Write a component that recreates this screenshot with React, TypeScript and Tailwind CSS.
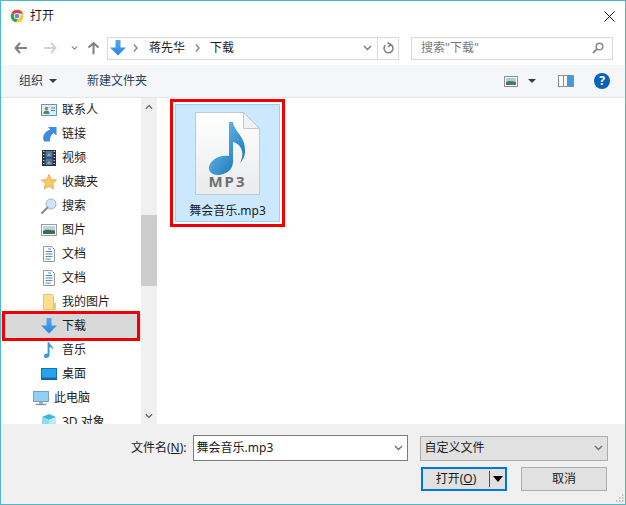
import type { ReactNode } from "react";

const Chrome = () => (
  <svg width="14" height="14" viewBox="0 0 16 16">
    <path d="M8 8 1.700 4.600A7.500 7.500 0 0 1 15 5.500H8Z" fill="#d9453a" />
    <path d="M1.700 4.600A7.500 7.500 0 0 0 7 15.500l3.200-6Z" fill="#3a9d58" />
    <path d="M15 5.500A7.500 7.500 0 0 1 7 15.500l3.400-7.500Z" fill="#f5c93f" />
    <circle cx="8" cy="8" r="3.500" fill="#fff" />
    <circle cx="8" cy="8" r="2.700" fill="#5a8fe8" />
  </svg>
);

const Arrow = ({ color, flip }: { color: string; flip?: boolean }) => (
  <svg width="13" height="12" viewBox="0 0 13 12" className={flip ? "rotate-180" : ""}>
    <path d="M6 1 1.500 6 6 11M2 6h11" fill="none" stroke={color} strokeWidth="2" />
  </svg>
);

const Chevron = ({ color = "#7a7a7a", size = 9 }: { color?: string; size?: number }) => (
  <svg width={size} height={6} viewBox="0 0 9 6">
    <path d="M1 1l3.500 3.500L8 1" fill="none" stroke={color} strokeWidth="1.400" />
  </svg>
);

const CrumbSep = () => (
  <svg width="5" height="8" viewBox="0 0 5 8">
    <path d="M1 .5 4 4 1 7.500" fill="none" stroke="#8a8a8a" strokeWidth="1.500" />
  </svg>
);

const Caret = ({ color = "#2b3f5c" }: { color?: string }) => (
  <svg width="8" height="4" viewBox="0 0 8 4">
    <path d="M0 0h8L4 4Z" fill={color} />
  </svg>
);

const DownloadIcon = ({ w = 16, h = 16 }: { w?: number; h?: number }) => (
  <svg width={w} height={h} viewBox="0 0 16 16">
    <defs>
      <linearGradient id="dl" x1="0" y1="0" x2="0" y2="1">
        <stop offset="0" stopColor="#55a6ee" />
        <stop offset="1" stopColor="#2d86e0" />
      </linearGradient>
    </defs>
    <path d="M5.500 0h5v7.500H16L8 15.500 0 7.500h5.500Z" fill="url(#dl)" />
  </svg>
);

const Contact = () => (
  <svg width="16" height="12" viewBox="0 0 16 12">
    <rect x=".5" y=".5" width="15" height="11" fill="#dcecf8" stroke="#5d98c4" />
    <circle cx="5.500" cy="4.500" r="1.800" fill="#a97f5a" />
    <path d="M2.500 10c0-2.600 1.300-3.500 3-3.500s3 .9 3 3.500Z" fill="#4d8a6a" />
    <path d="M10 4h4M10 6.500h4" stroke="#5d7f9c" />
  </svg>
);

const Link = () => (
  <svg width="16" height="16" viewBox="0 0 16 16">
    <path d="M7 1h8.500v8.500l-2.800-2.600C10.500 8.500 9 10.500 9 15.500H3C1 11 2.500 6 9.400 3.600Z" fill="#3f8ede" />
  </svg>
);

const Film = () => (
  <svg width="14" height="16" viewBox="0 0 14 16">
    <rect width="14" height="16" fill="#2e2e2e" />
    <path d="M1 1.500h1.500M1 4.500h1.500M1 7.500h1.500M1 10.500h1.500M1 13.500h1.500M11.500 1.500H13M11.500 4.500H13M11.500 7.500H13M11.500 10.500H13M11.500 13.500H13" stroke="#cfcfcf" />
    <rect x="3.500" y="1" width="7" height="6.500" fill="#3e78c8" />
    <rect x="3.500" y="8.500" width="7" height="6.500" fill="#3e78c8" />
    <path d="M5 6l2-3 2 3ZM5 14l2-3 2 3Z" fill="#d9a928" />
  </svg>
);

const Star = () => (
  <svg width="16" height="16" viewBox="0 0 16 16">
    <path d="M8 .5l2.300 5 5.200.6-3.900 3.500 1.100 5.400L8 12.300 3.300 15l1.100-5.400L.5 6.100l5.200-.6Z" fill="#f9c867" stroke="#e2a04a" strokeWidth=".8" />
  </svg>
);

const Magnifier = () => (
  <svg width="16" height="16" viewBox="0 0 16 16">
    <circle cx="10" cy="6" r="5" fill="#cfe6fa" stroke="#9db4c8" />
    <path d="M6.400 9.600 1 15" stroke="#7f7f7f" strokeWidth="1.800" strokeLinecap="round" />
  </svg>
);

const Picture = () => (
  <svg width="16" height="12" viewBox="0 0 16 12">
    <rect x=".5" y=".5" width="15" height="11" fill="#fff" stroke="#9c9c9c" />
    <rect x="2" y="2" width="12" height="8" fill="#b8d4ea" />
    <path d="M2 7c3-2 5-1.500 12-.5V10H2Z" fill="#3f6d52" />
  </svg>
);

const Doc = () => (
  <svg width="12" height="16" viewBox="0 0 12 16">
    <path d="M.5.500h8l3 3v12H.5Z" fill="#fbfbfb" stroke="#9a9a9a" />
    <path d="M5 3h3M2.500 5.500h7M2.500 8h7M2.500 10.500h7M2.500 13h5" stroke="#4f8fc8" />
  </svg>
);

const Folder = () => (
  <svg width="13" height="16" viewBox="0 0 13 16">
    <path d="M.5.500h9l1 1V15.500H.5Z" fill="#fde08f" stroke="#e6c46a" />
    <path d="M10.500 9h2v6.500h-2Z" fill="#f2cd6f" stroke="#e0bb60" strokeWidth=".6" />
  </svg>
);

const Note = () => (
  <svg width="10" height="16" viewBox="0 0 10 16">
    <path d="M3.600 0h1.500c.3 3 4.400 3.700 4 8-.4-1.600-2-2.700-3.600-2.900V13c0 1.800-1.600 3-3.400 3C.700 16 0 15 0 14c0-1.500 1.700-2.700 3.600-2.300Z" fill="#2f9be8" />
  </svg>
);

const Desktop = () => (
  <svg width="16" height="12" viewBox="0 0 16 12">
    <rect width="16" height="11" fill="#0b72c9" />
    <rect x="1" y="1" width="14" height="8.500" fill="#27a3ee" />
    <rect y="10.500" width="16" height="1.500" fill="#1c5c94" />
  </svg>
);

const Computer = () => (
  <svg width="16" height="15" viewBox="0 0 16 15">
    <rect x=".5" y=".5" width="15" height="10" fill="#8fd0f4" stroke="#7ba1b8" />
    <path d="M6 11h4v2H6Z" fill="#9ab0bd" />
    <path d="M2.500 13.500h11" stroke="#8a9aa5" strokeWidth="1.500" />
  </svg>
);

const Cube = () => (
  <svg width="16" height="16" viewBox="0 0 16 16">
    <path d="M8 0l7 3-7 3-7-3Z" fill="#3db8d8" />
    <path d="M1 3l7 3v10l-7-3Z" fill="#8fdcec" />
    <path d="M15 3 8 6v10l7-3Z" fill="#b8ebf4" />
  </svg>
);

const Mp3Icon = () => (
  <svg width="65" height="83" viewBox="0 0 65 83">
    <defs>
      <linearGradient id="pg" x1="0" y1="0" x2="0" y2="1">
        <stop offset="0" stopColor="#ffffff" />
        <stop offset="1" stopColor="#e9ebec" />
      </linearGradient>
      <linearGradient id="ng" x1="0" y1="0" x2="1" y2="1">
        <stop offset="0" stopColor="#7fd0f5" />
        <stop offset="1" stopColor="#0c68b0" />
      </linearGradient>
    </defs>
    <path d="M.5.500h48l16 16v66H.5Z" fill="url(#pg)" stroke="#c4c8cc" />
    <path d="M48.500.500v16h16Z" fill="#f2f2f2" stroke="#c4c8cc" />
    <path d="M34 10h4c1 10 13 14 12 30-.2 4-2 8-5 11 2-4 3-8 2-12-1-5-5-8-9-9V50c0 8-8 13-15 13-6 0-9-3-9-7 0-7 10-14 20-12Z" fill="url(#ng)" />
  </svg>
);

const Mp3Thumb = () => (
  <div className="relative h-[83px] w-[65px]">
    <Mp3Icon />
    <span className="absolute bottom-[6px] left-0 w-full text-center text-[15px] font-bold tracking-[2px] text-[#6f6f6f]">
      MP3
    </span>
  </div>
);

const Row = ({
  icon,
  label,
  selected,
  indent = "pl-[40px]",
}: {
  icon: ReactNode;
  label: string;
  selected?: boolean;
  indent?: string;
}) => (
  <div className={`flex h-6 shrink-0 items-center ${indent} ${selected ? "bg-[#d9d9d9]" : ""}`}>
    <span className="flex w-4 justify-center">{icon}</span>
    <span className="ml-[5px] whitespace-nowrap">{label}</span>
  </div>
);

export default function App() {
  return (
    <div
      className="flex h-[505px] w-[626px] flex-col overflow-hidden border border-[#4cb9ca] bg-white text-[12px] leading-none text-[#1a1a1a]"
      style={{ fontFamily: '"Noto Sans", "Noto Sans CJK SC", sans-serif' }}
    >
      {/* title */}
      <div className="flex h-[30px] shrink-0 items-center pl-[9px] pr-[10px]">
        <Chrome />
        <span className="ml-[6px]">打开</span>
        <svg width="11" height="11" viewBox="0 0 11 11" className="ml-auto">
          <path d="M.5.500l10 10M10.500.500l-10 10" stroke="#1a1a1a" strokeWidth="1" />
        </svg>
      </div>

      {/* nav */}
      <div className="flex h-[34px] shrink-0 items-center pr-3">
        <span className="ml-[13px]"><Arrow color="#7f7f7f" /></span>
        <span className="ml-[17px]"><Arrow color="#d4d4d4" flip /></span>
        <span className="ml-[14px]"><Chevron color="#8a8a8a" size={7} /></span>
        <span className="ml-[9px] rotate-90"><Arrow color="#7f7f7f" /></span>
        <div className="ml-[7px] flex h-[23px] w-[292px] items-center border border-[#d9d9d9]">
          <span className="ml-[2px]"><DownloadIcon /></span>
          <span className="ml-[7px]"><CrumbSep /></span>
          <span className="ml-[11px]">蒋先华</span>
          <span className="ml-[10px]"><CrumbSep /></span>
          <span className="ml-[10px]">下载</span>
          <span className="ml-auto mr-[5px]"><Chevron /></span>
          <div className="flex h-full w-[21px] items-center justify-center border-l border-[#d9d9d9]">
            <svg width="11" height="12" viewBox="0 0 11 12">
              <path d="M7.800 2.500A4.500 4.500 0 1 1 2.500 3M4.500 .5 7.800 2.500 5 5" fill="none" stroke="#7f7f7f" strokeWidth="1.500" />
            </svg>
          </div>
        </div>
        <div className="ml-3 flex h-[23px] w-[202px] items-center border border-[#d9d9d9] pl-[9px] pr-2 text-[#7a7a7a]">
          <span>搜索"下载"</span>
          <svg width="12" height="12" viewBox="0 0 12 12" className="ml-auto">
            <circle cx="7.500" cy="4.500" r="3.300" fill="none" stroke="#8a8a8a" strokeWidth="1.500" />
            <path d="M5 7 1 11" stroke="#8a8a8a" strokeWidth="2" />
          </svg>
        </div>
      </div>

      {/* toolbar */}
      <div className="flex h-[33px] shrink-0 items-center border-b border-[#e5e5e5] bg-[#f5f6f7] text-[#2b3f5c]">
        <span className="ml-[18px]">组织</span>
        <span className="ml-[6px]"><Caret /></span>
        <span className="ml-[30px]">新建文件夹</span>
        <span className="ml-auto">
          <svg width="14" height="11" viewBox="0 0 14 11">
            <rect x=".5" y=".5" width="13" height="10" fill="#fff" stroke="#8f8f8f" />
            <rect x="2" y="2" width="10" height="7" fill="#a9d0ea" />
            <path d="M2 6c3-1.500 6-1 10 0v3H2Z" fill="#4d7a5c" />
          </svg>
        </span>
        <span className="ml-[10px]"><Caret /></span>
        <span className="ml-[22px]">
          <svg width="16" height="12" viewBox="0 0 16 12">
            <rect x=".5" y=".5" width="15" height="11" fill="#fff" stroke="#8f8f8f" />
            <rect x="9" y="1" width="6" height="10" fill="#3f9be0" />
            <path d="M5.500 1v10" stroke="#8f8f8f" />
          </svg>
        </span>
        <span className="ml-5 mr-[15px] flex h-4 w-4 items-center justify-center rounded-full bg-[#0a62b8] text-[12px] font-bold text-white">?</span>
      </div>

      {/* body */}
      <div className="flex min-h-0 flex-1">
        <div className="relative flex w-[140px] shrink-0 flex-col overflow-hidden">
          <Row icon={<Contact />} label="联系人" />
          <Row icon={<Link />} label="链接" />
          <Row icon={<Film />} label="视频" />
          <Row icon={<Star />} label="收藏夹" />
          <Row icon={<Magnifier />} label="搜索" />
          <Row icon={<Picture />} label="图片" />
          <Row icon={<Doc />} label="文档" />
          <Row icon={<Doc />} label="文档" />
          <Row icon={<Folder />} label="我的图片" />
          <Row icon={<DownloadIcon />} label="下载" selected />
          <Row icon={<Note />} label="音乐" />
          <Row icon={<Desktop />} label="桌面" />
          <Row icon={<Computer />} label="此电脑" indent="pl-[32px]" />
          <Row icon={<Cube />} label="3D 对象" />
          {/* annotation */}
          <div className="absolute left-[1px] top-[213px] h-[30px] w-[138px] border-[3px] border-[#f00000]" />
        </div>

        {/* scrollbar */}
        <div className="flex w-4 shrink-0 flex-col items-stretch bg-[#f0f0f0]">
          <div className="flex h-[17px] shrink-0 items-center justify-center">
            <span className="rotate-180"><Chevron color="#606060" size={8} /></span>
          </div>
          <div className="mt-[100px] h-[71px] shrink-0 bg-[#cdcdcd]" />
          <div className="mt-auto flex h-[17px] shrink-0 items-center justify-center">
            <Chevron color="#606060" size={8} />
          </div>
        </div>

        {/* files */}
        <div className="relative flex-1 pl-[13px] pt-[1px]">
          <div className="box-content flex h-[118px] w-[105px] border-[3px] border-[#f00000] p-[2px]">
            <div className="flex w-full flex-col items-center border border-[#99d1ff] bg-[#cce8ff] pt-[7px]">
              <Mp3Thumb />
              <span className="mt-[10px] whitespace-nowrap">舞会音乐.mp3</span>
            </div>
          </div>
        </div>
      </div>

      {/* footer */}
      <div className="relative flex h-[80px] shrink-0 flex-col bg-[#f0f0f0] pl-[130px] pt-[11px]">
        <div className="flex items-center">
          <span className="whitespace-nowrap">
            文件名(<span className="underline">N</span>):
          </span>
          <div className="ml-[6px] flex h-[26px] w-[215px] items-center justify-between border border-[#7a7a7a] bg-white pl-[3px] pr-[4px]">
            <span>舞会音乐.mp3</span>
            <Chevron color="#707070" />
          </div>
          <div className="ml-[12px] flex h-[25px] w-[188px] items-center justify-between border border-[#adadad] bg-[#e1e1e1] pl-[4px] pr-[4px]">
            <span>自定义文件</span>
            <Chevron color="#707070" />
          </div>
        </div>
        <div className="mt-[6px] flex items-center pl-[290px]">
          <div className="flex h-6 w-[86px] items-center border-2 border-[#0078d7] bg-[#e1e1e1]">
            <span className="flex-1 text-center">
              打开(<span className="underline">O</span>)
            </span>
            <span className="h-4 w-px bg-[#555]" />
            <span className="flex w-[15px] justify-center">
              <svg width="10" height="6" viewBox="0 0 10 6"><path d="M0 0h10L5 6Z" fill="#000" /></svg>
            </span>
          </div>
          <div className="ml-[14px] flex h-6 w-[86px] items-center justify-center border border-[#adadad] bg-[#e1e1e1]">
            取消
          </div>
        </div>
        <svg width="9" height="9" viewBox="0 0 9 9" className="absolute bottom-[1px] right-[1px]">
          <path d="M7 1h1.500M4 4h1.500M7 4h1.500M1 7h1.500M4 7h1.500M7 7h1.500" stroke="#b8b8b8" strokeWidth="1.500" />
        </svg>
      </div>
    </div>
  );
}
